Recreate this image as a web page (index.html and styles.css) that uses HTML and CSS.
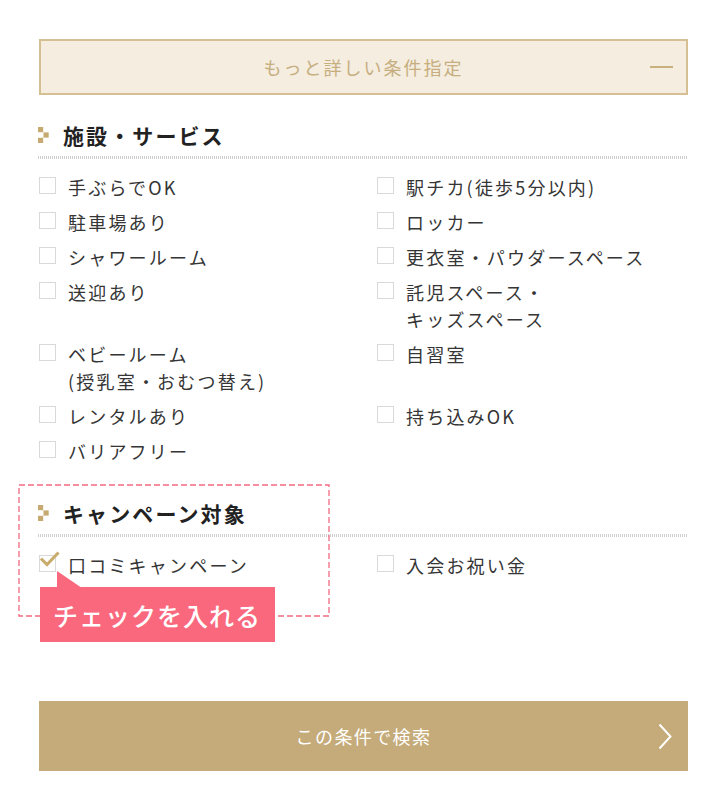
FILE: index.html
```html
<!DOCTYPE html>
<html lang="ja">
<head>
<meta charset="utf-8">
<title>条件指定</title>
<link rel="stylesheet" href="styles.css">
</head>
<body>
<div class="page">
  <div class="toggle">
    <span></span>
    <span class="toggle-label">もっと詳しい条件指定</span>
    <span class="toggle-minus"></span>
  </div>

  <section class="group">
    <h2 class="group-title">
      <svg class="bullet" width="11" height="16" viewBox="0 0 11 16"><rect x="0" y="0" width="5.2" height="5.2"/><rect x="5.5" y="5.4" width="5.2" height="5.2"/><rect x="0" y="10.8" width="5.2" height="5.2"/></svg>
      <span>施設・サービス</span>
    </h2>
    <ul class="options">
      <li class="option"><span class="box"></span><span class="label">手ぶらでOK</span></li>
      <li class="option"><span class="box"></span><span class="label">駅チカ(徒歩5分以内)</span></li>
      <li class="option"><span class="box"></span><span class="label">駐車場あり</span></li>
      <li class="option"><span class="box"></span><span class="label">ロッカー</span></li>
      <li class="option"><span class="box"></span><span class="label">シャワールーム</span></li>
      <li class="option"><span class="box"></span><span class="label">更衣室・パウダースペース</span></li>
      <li class="option"><span class="box"></span><span class="label">送迎あり</span></li>
      <li class="option"><span class="box"></span><span class="label">託児スペース・<br>キッズスペース</span></li>
      <li class="option"><span class="box"></span><span class="label">ベビールーム<br>(授乳室・おむつ替え)</span></li>
      <li class="option"><span class="box"></span><span class="label">自習室</span></li>
      <li class="option"><span class="box"></span><span class="label">レンタルあり</span></li>
      <li class="option"><span class="box"></span><span class="label">持ち込みOK</span></li>
      <li class="option"><span class="box"></span><span class="label">バリアフリー</span></li>
    </ul>
  </section>

  <section class="group campaign">
    <h2 class="group-title">
      <svg class="bullet" width="11" height="16" viewBox="0 0 11 16"><rect x="0" y="0" width="5.2" height="5.2"/><rect x="5.5" y="5.4" width="5.2" height="5.2"/><rect x="0" y="10.8" width="5.2" height="5.2"/></svg>
      <span>キャンペーン対象</span>
    </h2>
    <ul class="options">
      <li class="option"><span class="box checked"><svg class="check" width="20" height="16" viewBox="0 0 20 16"><path d="M2 7.5 L7 12.5 L17.5 1.5"/></svg></span><span class="label">口コミキャンペーン</span></li>
      <li class="option"><span class="box"></span><span class="label">入会お祝い金</span></li>
    </ul>

    <svg class="annot-frame" width="312" height="133" viewBox="0 0 312 133"><rect x="1" y="1" width="310" height="131"/></svg>
    <div class="callout">
      <svg class="callout-tail" width="25" height="17" viewBox="0 0 25 17"><path d="M0 0 L0 17 L25 17 Z"/></svg>
      <span>チェックを入れる</span>
    </div>
  </section>

  <button class="search" type="button">
    <span></span>
    <span class="search-label">この条件で検索</span>
    <svg class="search-arrow" width="14" height="27" viewBox="0 0 14 27"><path d="M1.5 1.5 L12.5 13.5 L1.5 25.5"/></svg>
  </button>
</div>
</body>
</html>
```

FILE: styles.css
```css
* { box-sizing: border-box; }

html, body {
  margin: 0;
  padding: 0;
  background: #ffffff;
}

body {
  font-family: "Noto Sans CJK JP", "Noto Sans", sans-serif;
  color: #333333;
}

.page {
  width: 650px;
  margin-left: 38px;
  padding-top: 39px;
  padding-bottom: 29px;
}

/* toggle */
.toggle {
  display: grid;
  grid-template-columns: 1fr auto 1fr;
  align-items: center;
  height: 56px;
  margin-left: 1px;
  background: #f4ede0;
  border: 2px solid #d6bf92;
}

.toggle-label {
  font-size: 18px;
  letter-spacing: 2px;
  color: #c7ae7f;
  line-height: 1;
}

.toggle-minus {
  justify-self: end;
  width: 23px;
  height: 2px;
  margin-right: 13px;
  background: #c9b07f;
}

/* groups */
.group {
  margin-top: 25px;
}

.group.campaign {
  position: relative;
  margin-top: 33px;
}

.group-title {
  display: flex;
  align-items: center;
  gap: 14px;
  margin: 0;
  padding: 0 0 9px 0;
  font-size: 21px;
  line-height: 30px;
  font-weight: 700;
  letter-spacing: 2.1px;
  color: #222222;
  background-image: repeating-linear-gradient(90deg, #cfcfcf 0 1px, transparent 1px 2px);
  background-size: 100% 3px;
  background-repeat: no-repeat;
  background-position: left bottom;
}

.bullet rect {
  fill: #c6aa70;
}

.options {
  list-style: none;
  margin: 15px 0 0;
  padding: 0;
  display: grid;
  grid-template-columns: 338px 1fr;
  row-gap: 8px;
}

.option {
  display: flex;
  align-items: flex-start;
  gap: 12px;
  padding-left: 1px;
}

.box {
  position: relative;
  flex: none;
  width: 17px;
  height: 17px;
  margin-top: 3px;
  border: 1px solid #d9d9d9;
  background: #ffffff;
}

.check {
  position: absolute;
  left: 0;
  top: -4px;
  overflow: visible;
}

.check path {
  fill: none;
  stroke: #c9ab6c;
  stroke-width: 3;
  stroke-linecap: square;
  stroke-linejoin: miter;
}

.label {
  font-size: 18px;
  line-height: 27px;
  letter-spacing: 2.2px;
  color: #353535;
}

/* annotation */
.annot-frame {
  position: absolute;
  left: -20px;
  top: -14px;
  overflow: visible;
}

.annot-frame rect {
  fill: none;
  stroke: #f26a80;
  stroke-width: 1.3;
  stroke-dasharray: 6 3;
}

.callout {
  position: absolute;
  left: 2px;
  top: 89px;
  width: 235px;
  height: 55px;
  display: flex;
  align-items: center;
  padding-left: 13px;
  background: #fa687e;
  color: #ffffff;
  font-size: 25px;
  font-weight: 500;
  letter-spacing: 1px;
}

.callout-tail {
  position: absolute;
  left: 17px;
  top: -16px;
}

.callout-tail path {
  fill: #fa687e;
}

/* search button */
.search {
  display: grid;
  grid-template-columns: 1fr auto 1fr;
  align-items: center;
  width: 649px;
  height: 70px;
  margin: 122px 0 0 1px;
  padding: 0;
  border: 0;
  background: #c5ab79;
  font-family: inherit;
  color: #ffffff;
}

.search-label {
  font-size: 18px;
  letter-spacing: 1.4px;
  line-height: 1;
}

.search-arrow {
  justify-self: end;
  margin-right: 16px;
}

.search-arrow path {
  fill: none;
  stroke: #ffffff;
  stroke-width: 2;
}
```
